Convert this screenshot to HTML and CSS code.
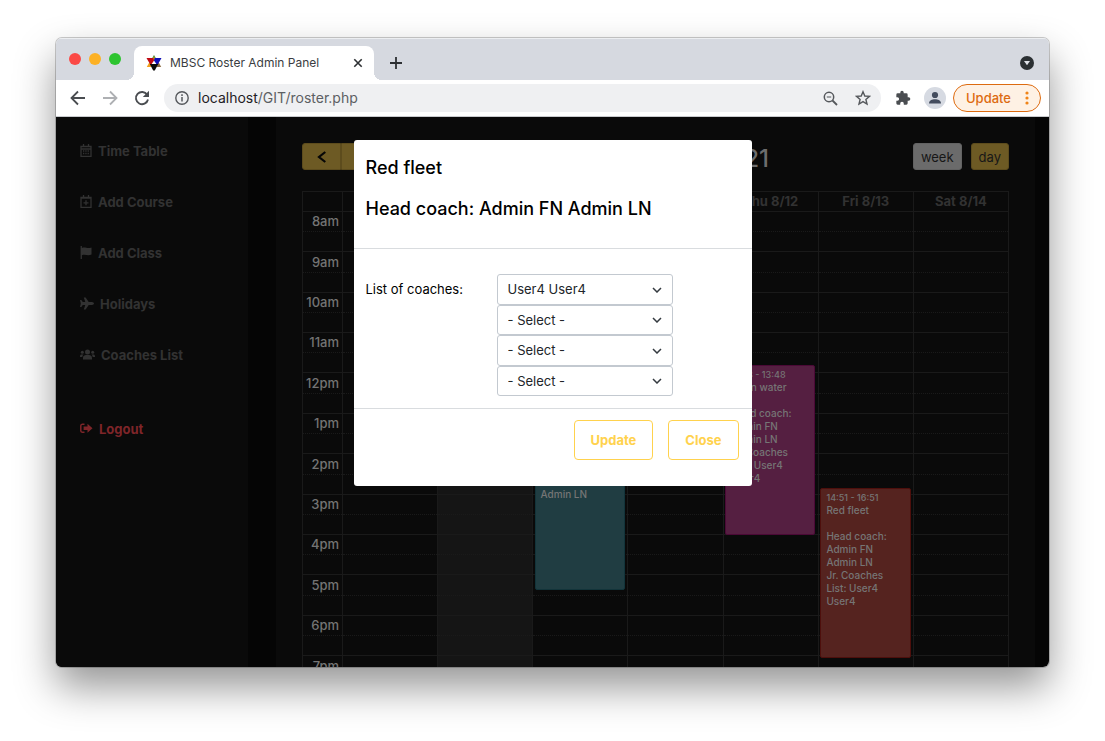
FILE: index.html
```html
<!DOCTYPE html>
<html lang="en">
<head>
<meta charset="utf-8">
<title>MBSC Roster Admin Panel</title>
<link rel="stylesheet" href="styles.css">
</head>
<body>
<div class="window">
  <header class="tabstrip">
    <div class="lights"><span class="light light-red"></span><span class="light light-amber"></span><span class="light light-green"></span></div>
    <div class="tab">
      <svg class="favicon" width="16" height="16" viewBox="0 0 16 16" aria-hidden="true">
        <path d="M8 0 10.500 4.500H5.500Z" fill="#2f7d32"/><path d="M3.500 7 .8 12h5Z" fill="#f2a01c"/><path d="M12.500 7l2.700 5h-5Z" fill="#8a6b43"/><path d="M.5 3H8v5L4.500 10Z" fill="#c00a14"/><path d="M15.500 3H8v5l3.500 2Z" fill="#1010b8"/><path d="M8 5.500 5.500 9.200h5Z" fill="#fff"/><path d="M3.800 9h8.400L8.800 15.500H7.200Z" fill="#0a0a0a"/><path d="M8 1.500v3" stroke="#e2b01c"/>
      </svg>
      <span class="tab-title">MBSC Roster Admin Panel</span>
      <button class="icon-btn" aria-label="Close tab"><svg width="10" height="10" viewBox="0 0 10 10"><path d="M1.300 1.300 8.700 8.700M8.700 1.300 1.300 8.700" stroke="#2d3033" stroke-width="1.600"/></svg></button>
    </div>
    <button class="icon-btn new-tab" aria-label="New tab"><svg width="12" height="12" viewBox="0 0 12 12"><path d="M6 0v12M0 6h12" stroke="#2d3033" stroke-width="1.800"/></svg></button>
    <button class="icon-btn tab-search" aria-label="Search tabs"><svg width="14" height="14" viewBox="0 0 14 14"><circle cx="7" cy="7" r="7" fill="#2b3033"/><path d="M4 5h6L7 9.300Z" fill="#dfe2e8"/></svg></button>
  </header>

  <div class="toolbar">
    <nav class="nav-buttons">
      <button class="icon-btn" aria-label="Back"><svg width="16" height="16" viewBox="0 0 16 16" fill="none" stroke="#4a4d51" stroke-width="1.800"><path d="M15 8H2M8 1.500 1.500 8 8 14.500"/></svg></button>
      <button class="icon-btn" aria-label="Forward"><svg width="16" height="16" viewBox="0 0 16 16" fill="none" stroke="#aeb0b3" stroke-width="1.800"><path d="M1 8h13M8 1.500 14.500 8 8 14.500"/></svg></button>
      <button class="icon-btn" aria-label="Reload"><svg width="16" height="16" viewBox="0 0 16 16"><path d="M13.200 4.800A6.100 6.100 0 1 0 14 9.500" fill="none" stroke="#4a4d51" stroke-width="1.900"/><path d="M15 .8V7H8.800Z" fill="#4a4d51"/></svg></button>
    </nav>
    <div class="omnibox">
      <svg width="14" height="14" viewBox="0 0 14 14" aria-hidden="true"><circle cx="7" cy="7" r="6.200" fill="none" stroke="#55585c" stroke-width="1.400"/><path d="M7 6v4.500M7 3.300v1.600" stroke="#55585c" stroke-width="1.500"/></svg>
      <span class="url"><span class="host">localhost</span>/GIT/roster.php</span>
      <button class="icon-btn" aria-label="Zoom"><svg width="16" height="15" viewBox="0 0 16 15" fill="none" stroke="#55585c"><circle cx="6" cy="6" r="4.700" stroke-width="1.500"/><path d="M9.500 9.500 14 14" stroke-width="1.800"/><path d="M3.800 6h4.400" stroke-width="1.200"/></svg></button>
      <button class="icon-btn" aria-label="Bookmark"><svg width="16" height="16" viewBox="0 0 16 16"><path d="M8 1.700 9.800 6l4.700.4-3.600 3.100 1.100 4.600L8 11.600l-4 2.500 1.100-4.600L1.500 6.400 6.200 6Z" fill="none" stroke="#55585c" stroke-width="1.400"/></svg></button>
    </div>
    <button class="icon-btn" aria-label="Extensions"><svg width="16" height="16" viewBox="0 0 24 24"><path d="M20.500 11H19V7a2 2 0 0 0-2-2h-4V3.500a2.500 2.500 0 0 0-5 0V5H4a2 2 0 0 0-2 2v3.800h1.500a2.700 2.700 0 0 1 0 5.400H2V20a2 2 0 0 0 2 2h3.800v-1.500a2.700 2.700 0 0 1 5.400 0V22H17a2 2 0 0 0 2-2v-4h1.500a2.500 2.500 0 0 0 0-5Z" fill="#4a4d51"/></svg></button>
    <button class="icon-btn avatar" aria-label="Profile"><svg width="22" height="22" viewBox="0 0 22 22"><circle cx="11" cy="11" r="11" fill="#d6dae2"/><circle cx="11" cy="8" r="3.100" fill="#434c5e"/><path d="M5 16.500c0-3 3-4.300 6-4.300s6 1.300 6 4.300Z" fill="#434c5e"/></svg></button>
    <button class="update-pill">Update <svg width="4" height="14" viewBox="0 0 4 14"><g fill="#f08418"><circle cx="2" cy="2" r="1.600"/><circle cx="2" cy="7" r="1.600"/><circle cx="2" cy="12" r="1.600"/></g></svg></button>
  </div>

  <div class="page">
    <nav class="sidebar">
      <a href="#"><svg width="12" height="13" viewBox="0 0 12 13"><path d="M1 2.500h10v9.800H1ZM1 5h10M3.500 0v2.500M8.500 0v2.500" fill="none" stroke="currentColor" stroke-width="1.300"/><path d="M3 7h6M3 9.500h6" stroke="currentColor" stroke-width="1.300" stroke-dasharray="1.300 1"/></svg>Time Table</a>
      <a href="#"><svg width="12" height="13" viewBox="0 0 12 13"><path d="M1 2.500h10v9.800H1ZM1 3.200h10M3.500 0v2.500M8.500 0v2.500M6 5.300v5M3.500 7.800h5" fill="none" stroke="currentColor" stroke-width="1.300"/></svg>Add Course</a>
      <a href="#"><svg width="12" height="13" viewBox="0 0 12 13"><path d="M.6 0h1.300v2C5 .4 7 3 11.500 1.500v7C8 10.500 5 7.800 1.900 9.300V13H.6Z" fill="currentColor"/></svg>Add Class</a>
      <a href="#"><svg width="14" height="13" viewBox="0 0 14 13"><path d="M0 3h1.300l1.500 2h2.500L3.800.5h1.800L8.700 5H12c1 0 2 .8 2 1.500S13 8 12 8H8.700l-3.100 4.500H3.800L5.300 8H2.800L1.300 10H0l.8-3.500Z" fill="currentColor"/></svg>Holidays</a>
      <a href="#"><svg width="15" height="13" viewBox="0 0 15 13"><g fill="currentColor"><circle cx="7.500" cy="4" r="2.500"/><circle cx="2.300" cy="4.300" r="1.500"/><circle cx="12.700" cy="4.300" r="1.500"/><path d="M3 11.500V10c0-2 1.500-2.900 3-2.900h3c1.500 0 3 .9 3 2.900v1.500ZM0 9V8c0-1 .7-1.600 1.500-1.600H3.500C2.700 7.100 2.300 8 2.300 9ZM15 9V8c0-1-.7-1.600-1.500-1.600h-2c.8.700 1.200 1.600 1.200 2.600Z"/></g></svg>Coaches List</a>
      <a href="#" class="logout"><svg width="13" height="13" viewBox="0 0 13 13"><path d="M4.500 2.200H2.200A1.500 1.500 0 0 0 .8 3.700v5.100a1.500 1.500 0 0 0 1.400 1.500h2.300" fill="none" stroke="currentColor" stroke-width="1.500"/><path d="M12.500 6.250 7.500 1.700v2.700H3.600v3.700h3.900v2.700Z" fill="currentColor"/></svg>Logout</a>
    </nav>

    <main class="main">
      <div class="cal-toolbar">
        <div class="cal-left">
          <div class="btn-group">
            <button class="cal-btn" aria-label="Previous"><svg width="10" height="12" viewBox="0 0 10 12"><path d="M8.300 1 2 6l6.300 5" fill="none" stroke="#060606" stroke-width="2.200"/></svg></button><button class="cal-btn" aria-label="Next"><svg width="10" height="12" viewBox="0 0 10 12"><path d="M1.700 1 8 6l-6.300 5" fill="none" stroke="#060606" stroke-width="2.200"/></svg></button>
          </div>
          <button class="cal-btn">today</button>
        </div>
        <h2 class="cal-title">Aug 8 – 14, 2021</h2>
        <div class="cal-right"><button class="cal-btn cal-btn-active">week</button><button class="cal-btn">day</button></div>
      </div>

      <div class="calendar">
        <table class="grid">
          <colgroup><col class="time-col"><col><col class="today"><col><col><col><col><col></colgroup>
          <thead><tr><th></th><th>Sun 8/8</th><th>Mon 8/9</th><th>Tue 8/10</th><th>Wed 8/11</th><th>Thu 8/12</th><th>Fri 8/13</th><th>Sat 8/14</th></tr></thead>
          <tbody>
            <tr><th>8am</th><td></td><td></td><td></td><td></td><td></td><td></td><td></td></tr>
            <tr><th></th><td></td><td></td><td></td><td></td><td></td><td></td><td></td></tr>
            <tr><th>9am</th><td></td><td></td><td></td><td></td><td></td><td></td><td></td></tr>
            <tr><th></th><td></td><td></td><td></td><td></td><td></td><td></td><td></td></tr>
            <tr><th>10am</th><td></td><td></td><td></td><td></td><td></td><td></td><td></td></tr>
            <tr><th></th><td></td><td></td><td></td><td></td><td></td><td></td><td></td></tr>
            <tr><th>11am</th><td></td><td></td><td></td><td></td><td></td><td></td><td></td></tr>
            <tr><th></th><td></td><td></td><td></td><td></td><td></td><td></td><td></td></tr>
            <tr><th>12pm</th><td></td><td></td><td></td><td></td><td></td><td></td><td></td></tr>
            <tr><th></th><td></td><td></td><td></td><td></td><td></td><td></td><td></td></tr>
            <tr><th>1pm</th><td></td><td></td><td></td><td></td><td></td><td></td><td></td></tr>
            <tr><th></th><td></td><td></td><td></td><td></td><td></td><td></td><td></td></tr>
            <tr><th>2pm</th><td></td><td></td><td></td><td></td><td></td><td></td><td></td></tr>
            <tr><th></th><td></td><td></td><td></td><td></td><td></td><td></td><td></td></tr>
            <tr><th>3pm</th><td></td><td></td><td></td><td></td><td></td><td></td><td></td></tr>
            <tr><th></th><td></td><td></td><td></td><td></td><td></td><td></td><td></td></tr>
            <tr><th>4pm</th><td></td><td></td><td></td><td></td><td></td><td></td><td></td></tr>
            <tr><th></th><td></td><td></td><td></td><td></td><td></td><td></td><td></td></tr>
            <tr><th>5pm</th><td></td><td></td><td></td><td></td><td></td><td></td><td></td></tr>
            <tr><th></th><td></td><td></td><td></td><td></td><td></td><td></td><td></td></tr>
            <tr><th>6pm</th><td></td><td></td><td></td><td></td><td></td><td></td><td></td></tr>
            <tr><th></th><td></td><td></td><td></td><td></td><td></td><td></td><td></td></tr>
            <tr><th>7pm</th><td></td><td></td><td></td><td></td><td></td><td></td><td></td></tr>
          </tbody>
        </table>
        <div class="events">
          <div class="event teal" style="margin-top:229px;height:170px"><small>13:00 - 15:00</small><br>Learn to sail<br><br>Head coach:<br>Admin FN<br>Admin LN</div>
          <div class="event purple" style="margin-top:174px;height:170px"><small>11:48 - 13:48</small><br>Open water<br><br>Head coach:<br>Admin FN<br>Admin LN<br>Jr. Coaches<br>List: User4<br>User4</div>
          <div class="event red" style="margin-top:297px;height:170px"><small>14:51 - 16:51</small><br>Red fleet<br><br>Head coach:<br>Admin FN<br>Admin LN<br>Jr. Coaches<br>List: User4<br>User4</div>
        </div>
      </div>
    </main>

    <div class="modal-layer">
      <section class="modal" role="dialog" aria-labelledby="modal-title">
        <header class="modal-head"><h5 id="modal-title">Red fleet</h5><h5>Head coach: Admin FN Admin LN</h5></header>
        <div class="modal-body">
          <label for="coach1">List of coaches:</label>
          <div class="selects">
            <div class="select"><select id="coach1"><option>User4 User4</option></select><svg width="10" height="6" viewBox="0 0 10 6"><path d="M1 1l4 4 4-4"/></svg></div>
            <div class="select"><select aria-label="Coach 2"><option>- Select -</option></select><svg width="10" height="6" viewBox="0 0 10 6"><path d="M1 1l4 4 4-4"/></svg></div>
            <div class="select"><select aria-label="Coach 3"><option>- Select -</option></select><svg width="10" height="6" viewBox="0 0 10 6"><path d="M1 1l4 4 4-4"/></svg></div>
            <div class="select"><select aria-label="Coach 4"><option>- Select -</option></select><svg width="10" height="6" viewBox="0 0 10 6"><path d="M1 1l4 4 4-4"/></svg></div>
          </div>
        </div>
        <footer class="modal-foot"><button class="outline-btn">Update</button><button class="outline-btn">Close</button></footer>
      </section>
    </div>
  </div>
</div>
</body>
</html>
```
FILE: styles.css
```css
* { box-sizing: border-box; }
body {
  margin: 0;
  height: 100vh;
  padding: 38px 56px 74px;
  display: flex;
  background: #fff;
  font: 13px/20px Inter, "Liberation Sans", sans-serif;
  overflow: hidden;
}
button, select { font: inherit; margin: 0; }
svg { display: block; flex: none; }
.window {
  flex: 1;
  min-width: 0;
  display: flex;
  flex-direction: column;
  border-radius: 6px;
  overflow: hidden;
  box-shadow: 0 0 0 1px rgba(0, 0, 0, .2), 0 20px 40px rgba(0, 0, 0, .42);
}
.icon-btn { border: 0; padding: 0; background: none; display: grid; place-items: center; }

/* Tab strip */
.tabstrip { height: 42px; flex: none; display: flex; background: #d6d9e0; padding: 8px 15px 0 13px; box-shadow: inset 0 1px #eceef1; }
.lights { display: flex; gap: 8px; padding-top: 7px; width: 65px; }
.light { width: 12px; height: 12px; border-radius: 50%; }
.light-red { background: #fb4946; }
.light-amber { background: #fdb124; }
.light-green { background: #2dc430; }
.tab { position: relative; width: 240px; background: #fff; border-radius: 8px 8px 0 0; display: flex; align-items: center; gap: 8px; padding: 0 11px 0 12px; }
.tab::before, .tab::after { content: ""; position: absolute; bottom: 0; width: 8px; height: 8px; }
.tab::before { right: 100%; background: radial-gradient(circle at 0 0, transparent 8px, #fff 8px); }
.tab::after { left: 100%; background: radial-gradient(circle at 100% 0, transparent 8px, #fff 8px); }
.tab-title { flex: 1; font-size: 12px; color: #3a3d41; }
.new-tab { margin-left: 16px; }
.tab-search { margin-left: auto; }

/* Address bar */
.toolbar { height: 37px; flex: none; display: flex; align-items: center; background: #fff; border-bottom: 1px solid #c9cbce; padding: 0 8px 0 14px; }
.nav-buttons { display: flex; gap: 16px; padding-right: 14px; }
.omnibox { flex: 1; height: 28px; border-radius: 14px; background: #eff0f2; display: flex; align-items: center; gap: 16px; padding: 0 10px 0 11px; margin-right: 14px; }
.url { flex: 1; font-size: 14px; color: #5c5f63; margin-left: -7px; }
.host { color: #1f2124; }
.avatar { margin: 0 7px 0 13px; }
.update-pill { height: 28px; display: flex; align-items: center; gap: 14px; border: 1px solid #dd6b10; border-radius: 14px; background: #fef1e4; color: #dd6b10; padding: 0 11px 0 12px; font-weight: 500; }

/* Page */
.page { position: relative; flex: 1; min-height: 0; display: flex; background: #050505; overflow: hidden; }
.sidebar { width: 192px; background: #0a0a0a; padding: 8px 24px; margin-right: 28px; }
.sidebar a { display: flex; align-items: center; gap: 6px; height: 51px; color: #323232; font-weight: 700; text-decoration: none; }
.sidebar .logout { margin-top: 23px; color: #7e2529; }
.main { flex: 1; min-width: 0; margin-right: 14px; padding: 26px 26px 0; background: #0a0a0a; }

.cal-toolbar { display: flex; justify-content: space-between; align-items: center; height: 27px; margin-bottom: 21px; }
.cal-left, .cal-right { display: flex; gap: 9px; }
.btn-group { display: flex; }
.btn-group .cal-btn { width: 39px; border-radius: 3px 0 0 3px; }
.btn-group .cal-btn + .cal-btn { border-radius: 0 3px 3px 0; }
.cal-btn { height: 27px; padding: 0 7px; display: grid; place-items: center; background: #6d5a24; border: 1px solid #5d4c1d; border-radius: 3px; color: #171717; }
.cal-btn-active { background: #6b6b6b; border-color: #626262; }
.cal-title { margin: 0; font-size: 24px; line-height: 27px; padding-top: 4px; font-weight: 500; color: #6d6d6d; }

.calendar { position: relative; }
.grid { width: 100%; table-layout: fixed; border-collapse: collapse; }
.grid th, .grid td { padding: 0; border: 1px solid #1a1a1a; }
.grid .time-col { width: 40px; }
.grid thead th { height: 20px; line-height: 19px; color: #323232; font-weight: 700; }
.grid tbody tr { height: 20px; }
.grid tbody tr:nth-child(10n+3), .grid tbody tr:nth-child(10n+9) { height: 21px; }
.grid tbody th { color: #747474; font-weight: 500; text-align: right; padding-right: 3px; line-height: 19px; }
.grid tbody tr:nth-child(even) > * { border-top: 1px dotted #1e1e1e; }
.grid tbody tr:nth-child(odd) > * { border-bottom-style: dotted; }
.grid tbody td:nth-child(3) { background: #151515; }

.events { position: absolute; inset: 0; display: grid; grid-template-columns: 40px repeat(7, 1fr); align-items: start; }
.event { border: 1px solid; border-radius: 2px; margin: 0 3px 0 2px; padding: 2px 5px; font-size: 10px; line-height: 13px; font-weight: 500; color: #757575; white-space: nowrap; overflow: hidden; }
.event small { font-size: 9px; }
.teal { grid-area: 1 / 4; background: #203d42; border-color: #12343a; }
.purple { grid-area: 1 / 6; background: #551f41; border-color: #4b0936; }
.red { grid-area: 1 / 7; background: #55231f; border-color: #4e0f0c; }

/* Dialog */
.modal-layer { position: absolute; inset: 0; display: flex; justify-content: center; align-items: flex-start; padding-top: 23px; }
.modal { width: 398px; background: #fff; border-radius: 3px; color: #000; }
.modal-head { padding: 17px 12px 29px; border-bottom: 1px solid #d9dcdf; }
.modal-head h5 { margin: 0; font-size: 18px; line-height: 21px; font-weight: 500; }
.modal-head h5 + h5 { margin-top: 20px; }
.modal-body { display: flex; padding: 25px 12px 12px; border-bottom: 1px solid #d9dcdf; }
.modal-body label { width: 131px; line-height: 31px; }
.selects { width: 176px; }
.select { display: grid; align-items: center; }
.select > * { grid-area: 1 / 1; }
.select select { appearance: none; width: 100%; height: 31px; border: 1px solid #c3c9d0; border-radius: 3px; background: #fff; color: #212529; padding: 0 28px 1px 10px; }
.select:nth-child(even) select { height: 30px; }
.select svg { justify-self: end; margin-right: 11px; pointer-events: none; fill: none; stroke: #343a40; stroke-width: 1.500; }
.modal-foot { display: flex; justify-content: flex-end; gap: 15px; padding: 11px 13px 26px; }
.outline-btn { height: 40px; padding: 0 16px; border: 1px solid #ffd24d; border-radius: 4px; background: #fff; color: #ffd24d; font-weight: 700; }
```
